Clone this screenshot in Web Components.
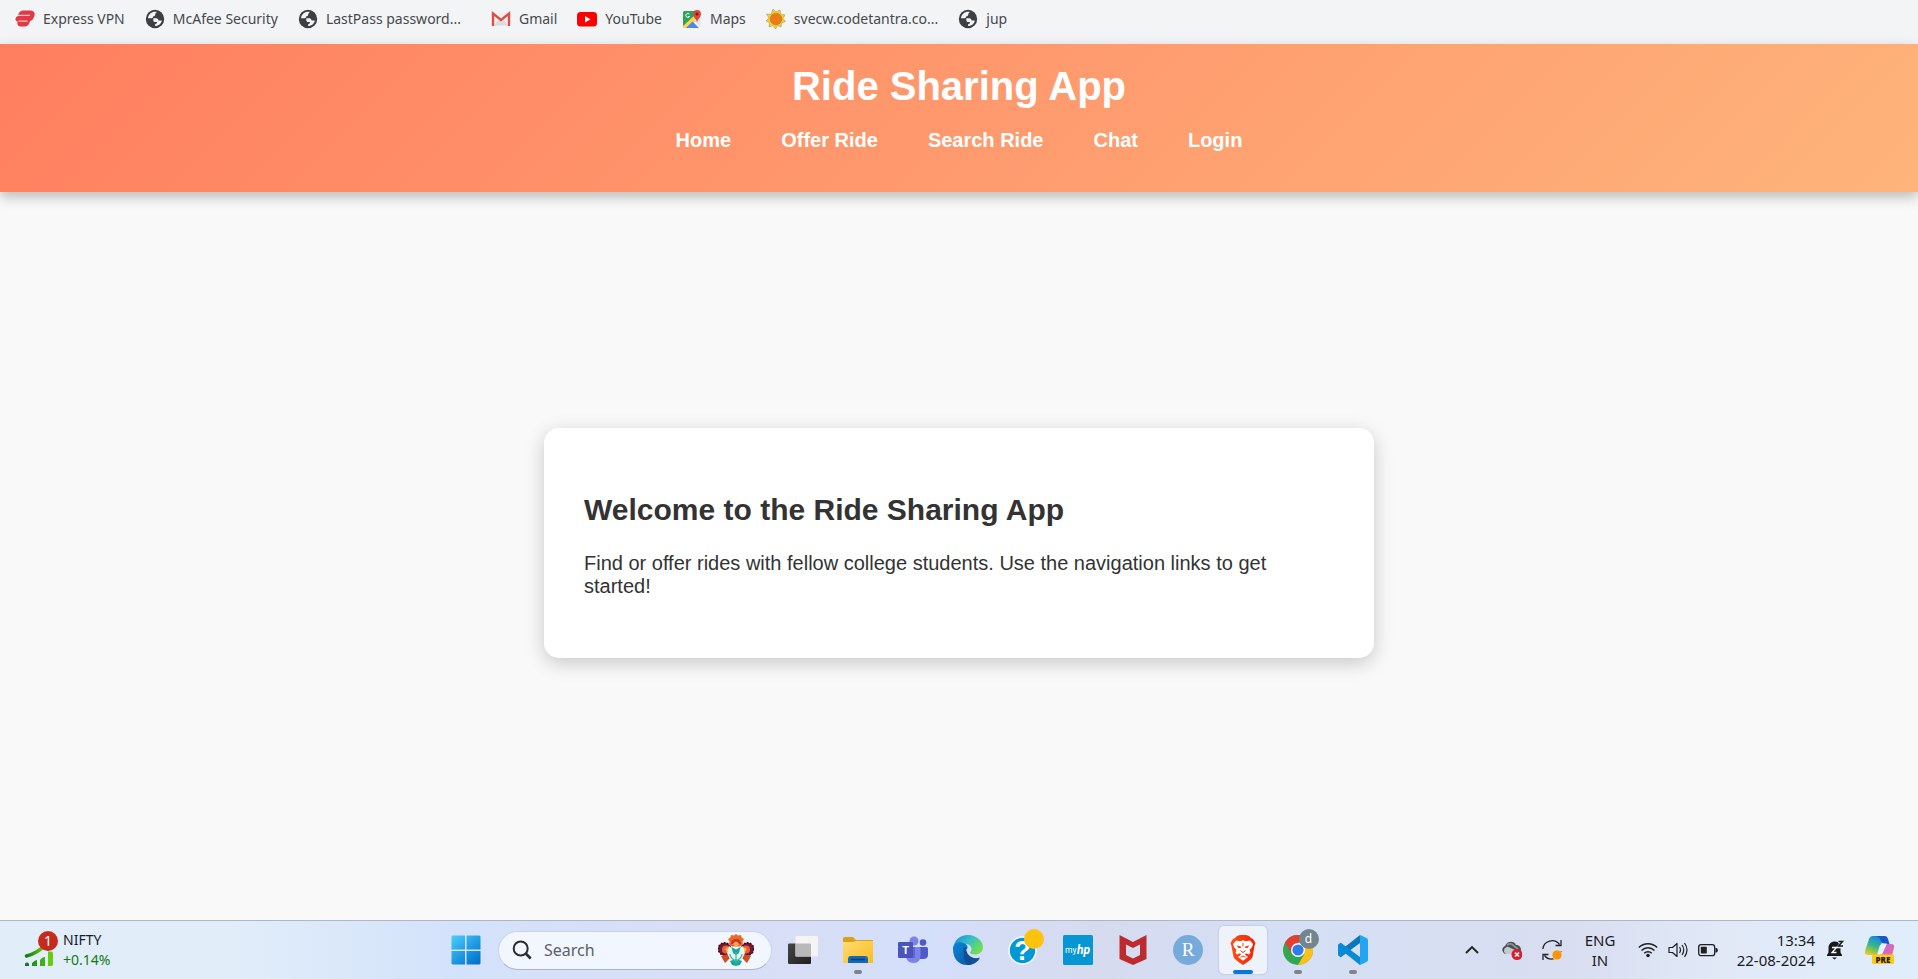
<!DOCTYPE html>
<html lang="en">
<head>
<meta charset="utf-8">
<meta name="viewport" content="width=device-width, initial-scale=1">
<title>Ride Sharing App</title>
<style>
html, body { margin: 0; height: 100%; }
body { background: #f9f9f9; color: #333; font-family: "Liberation Sans", Arial, sans-serif; }
</style>
</head>
<body>
<desk-shell>
  <bookmark-bar slot="top">
    <book-mark icon="express">Express VPN</book-mark>
    <book-mark icon="globe">McAfee Security</book-mark>
    <book-mark icon="globe" class="last">LastPass password...</book-mark>
    <book-mark icon="gmail">Gmail</book-mark>
    <book-mark icon="youtube">YouTube</book-mark>
    <book-mark icon="maps">Maps</book-mark>
    <book-mark icon="sun">svecw.codetantra.co...</book-mark>
    <book-mark icon="globe">jup</book-mark>
  </bookmark-bar>
  <site-header slot="header">
    <span slot="title">Ride Sharing App</span>
    <nav-link>Home</nav-link>
    <nav-link>Offer Ride</nav-link>
    <nav-link>Search Ride</nav-link>
    <nav-link>Chat</nav-link>
    <nav-link>Login</nav-link>
  </site-header>
  <welcome-card>
    <span slot="title">Welcome to the Ride Sharing App</span>
    Find or offer rides with fellow college students. Use the navigation links to get started!
  </welcome-card>
  <task-bar slot="bottom"></task-bar>
</desk-shell>

<script>
const icons = {
express: `<svg viewBox="0 0 20 20"><path d="M7.500 1.500h8.500a3.800 3.800 0 0 1 3.500 5l-1.200 3a3.500 3.500 0 0 1-3 2.300l-1 2.500A4.500 4.500 0 0 1 11 17.500H5.500a3.200 3.200 0 0 1-3-4.200l.2-.8A2.400 2.400 0 0 1 .6 9.300 3.400 3.400 0 0 1 3 7 6 6 0 0 1 7.500 1.500z" fill="#e03a46"/><path d="M3 6.300h12M3.500 12.200h9" stroke="#f3c3c8" stroke-width="1.300"/></svg>`,
globe: `<svg viewBox="0 0 20 20"><circle cx="10" cy="10" r="9.200" fill="#3c4043"/><path d="M12 3.100C7.500 2 3.500 5 3 9.300h3.600q1.600-.2 1.500-1.900 2.100 0 2.100-1.700Q10.300 4 12 3.100z" fill="#f3f4f6"/><path d="M8.300 9.300h3.500q1.500.3 1.800 2.200h3.200c-.5 3.200-3.200 5.600-6.700 5.500v-1.700q2-.3 2-2.300H9.600Q8 12.800 8.300 9.300z" fill="#f3f4f6"/><path d="M3.200 11.300h2.500q1.600.2 1.600 2 0 1.300 1.300 1.600v1.900C5.800 16.300 3.700 14 3.200 11.300z" fill="#3c4043"/></svg>`,
gmail: `<svg viewBox="0 0 20 20"><path d="M1 3.500h18v13H1z" fill="#eef0f2"/><path d="M3 16.500 8 10l2 1.500 2-1.500 5 6.500z" fill="#dcdcdf"/><path d="M2 17V4.500l8 6.500 8-6.500V17" fill="none" stroke="#e04f43" stroke-width="2.400"/></svg>`,
youtube: `<svg viewBox="0 0 20 20"><rect y="3" width="20" height="14.500" rx="3.500" fill="#f00"/><path d="m8 7 5.500 3.200L8 13.500z" fill="#fff"/></svg>`,
maps: `<svg viewBox="0 0 20 20"><path d="M2 2h11v8L3 19H1V3z" fill="#2fa25b"/><path d="m1 17 13-12h4v4L6 19H1z" fill="#fbd54b"/><path d="m4 19 6.500-6.500L17 19z" fill="#4b87ee"/><path d="m12 11 3.500-3 3 3v7z" fill="#e2e3e6"/><path d="M15 14c0-4-4-5-4-9a4 4 0 0 1 8 0c0 4-4 5-4 9z" fill="#df463b"/><circle cx="15" cy="5" r="1.500" fill="#761e1b"/><path d="M7.300 5A2 2 0 1 0 7.500 7.600H6" fill="none" stroke="#fff"/></svg>`,
sun: `<svg viewBox="0 0 20 20"><path d="m7 0 3 3 4-2 .5 4L19 6l-2 3.500 2.500 3-4 1.500-.5 4-3.500-1.500-2 3.500-2.500-3.500-4 1.500.5-4.500-3.500-1.500L3 9 .5 5l4.500.5z" fill="#f0d12c" stroke="#a79b63" stroke-width=".6"/><circle cx="10" cy="10" r="5.800" fill="#ed7a16" stroke="#b9762b" stroke-width=".6"/></svg>`,
stocks: `<svg viewBox="0 0 32 32"><defs><linearGradient id="g"><stop stop-color="#147b1b"/><stop offset="1" stop-color="#72d00b"/></linearGradient></defs><path d="M2.500 22c8-2 13-5 19-11" fill="none" stroke="url(#g)" stroke-width="3.500" stroke-linecap="round"/><path d="M1 31a2 2 0 0 1 4-1v2H1z" fill="#157c1b"/><path d="M8 29q3-3 5-3v6H8z" fill="#249320"/><path d="M16 26q2-3 5-3v9h-5z" fill="#41ad1a"/><path d="M24 17.500h3q2 0 2 2v11q0 1.500-2 1.500h-3z" fill="#67cb0e"/></svg>`,
windows: `<svg viewBox="0 0 30 30"><defs><linearGradient id="g" gradientUnits="userSpaceOnUse" x1="0" y1="0" x2="25" y2="30"><stop stop-color="#4cd0fb"/><stop offset="1" stop-color="#0071ce"/></linearGradient></defs><path d="M1.500.5H14v14H.5v-13zM15.500.5h13l1 1v13h-14zM.5 16H14v13.500H1.500l-1-1zM15.500 16h14v12.500l-1 1h-13z" fill="url(#g)"/></svg>`,
search: `<svg viewBox="0 0 20 20"><g fill="none" stroke="#2b2c30" stroke-width="2"><circle cx="8.700" cy="8.500" r="7"/><path d="m13.700 13.500 5 5" stroke-width="2.600"/></g></svg>`,
flowers: `<svg viewBox="0 0 36 32"><g fill="#741c2b"><circle cx="6.500" cy="15" r="6.500"/><circle cx="29.500" cy="15" r="6.500"/></g><g fill="none" stroke="#3e1424" stroke-width="2" stroke-dasharray="1.500 1.500"><circle cx="6.500" cy="15" r="6"/><circle cx="29.500" cy="15" r="6"/></g><g fill="#ee5b43"><circle cx="8" cy="15.500" r="4"/><circle cx="28" cy="15.500" r="4"/></g><g fill="#fbbd25"><circle cx="9.500" cy="15.500" r="2"/><circle cx="26.500" cy="15.500" r="2"/></g><path d="m18 0 2 1.500 3-.5.7 2.600L26 5l-1.500 2.500.5 3-3.500 2h-7l-3.500-2 .5-3L10 5l2.300-1.400L13 1l3 .5z" fill="#ee6a24"/><path d="M13 10q0-5 5-5t5 5z" fill="#c83724"/><path d="M15 10q3-5 6 0l-3 3z" fill="#fbac60"/><path d="m3 22 7-2 2 4-5 5zm30 0-7-2-2 4 5 5z" fill="#d34b23"/><path d="m11 12 7 5 7-5 2 7-5 10-4 2-4-2-5-10z" fill="#e6f5f1"/><path d="m13.500 13 4.500 2.500 4.500-2.500-1.500 6-3 2-3-2zM12 27q6-3 12 0l-2 4-4 1-4-1z" fill="#17a899"/><path d="M18 18v11M18 27c-3-1-6-4-6-7M18 27c3-1 6-4 6-7" fill="none" stroke="#45b9a8" stroke-width="1.300"/></svg>`,
taskview: `<svg viewBox="0 0 30 30"><defs><linearGradient id="g" y2="1"><stop stop-color="#454545"/><stop offset="1" stop-color="#202020"/></linearGradient></defs><rect y="8.500" width="23" height="20.500" rx="1.200" fill="url(#g)"/><rect x="7.500" y="1" width="22.500" height="20.500" rx="1.200" fill="#f4f4f4"/><path d="M7.500 8.500H22q1 0 1 1v12H7.500z" fill="#b9b9b9"/></svg>`,
folder: `<svg viewBox="0 0 30 30"><defs><linearGradient id="g" x2="1" y2="1"><stop stop-color="#ffdc72"/><stop offset="1" stop-color="#fdbb20"/></linearGradient></defs><path d="M0 3.500Q0 2 1.500 2H10l3 3h17v8H0z" fill="#dba018"/><path d="M0 7h10l3-1h17v22H1q-1 0-1-1z" fill="url(#g)"/><path d="M5 28v-4q0-3 3-3h14q3 0 3 3v4z" fill="#116bb7"/><path d="M8.500 24.500h13" stroke="#063c73" stroke-width="1.500" stroke-linecap="round"/></svg>`,
teams: `<svg viewBox="0 0 30 30"><circle cx="16" cy="6" r="4.500" fill="#7b83eb"/><circle cx="25" cy="7.500" r="3.300" fill="#5059c9"/><path d="M21 12h7.500q1.500 0 1.500 1.500V20q0 4-5 4h-4z" fill="#5059c9"/><path d="M8 12h13q1.500 0 1.500 1.500V20q0 8-7 8T8 21z" fill="#7b83eb"/><path d="M8 12h9v11H8z" fill="#6068cf"/><rect y="7" width="15" height="16" rx="1.300" fill="#4b53bc"/><text x="7.500" y="19" text-anchor="middle" font-family="Liberation Sans" font-weight="700" font-size="11" fill="#fff">T</text></svg>`,
edge: `<svg viewBox="0 0 30 30"><defs><linearGradient id="a" x2="1" y2=".6"><stop stop-color="#1484cb"/><stop offset=".5" stop-color="#36bdcf"/><stop offset="1" stop-color="#71df4b"/></linearGradient><linearGradient id="b" x2="1" y2="1"><stop stop-color="#0786db"/><stop offset="1" stop-color="#10529b"/></linearGradient></defs><path d="M0 14C1 5 7 0 15 0s15 6 15 12c0 5-4 7.500-8 7.500-3 0-5-1-5-2 0-.8 1.500-1 1.500-3.500 0-2-2-5-6-5C6 9 1 12 0 14z" fill="url(#a)"/><path d="M0 14c0-5 5-8 10-6 4 1 5.500 4 4 6-4 1-4 6-1 9 4 4 10 3 14 .5C23 29 18 30 14 30 6 30 0 24 0 14z" fill="url(#b)"/><path d="M10.500 16c0-2 1-4 2.500-4 0 8 6 13 14 10.500C23 28 19 30 15 30c-3-2-5-8-4.500-14z" fill="#114f94"/></svg>`,
help: `<svg viewBox="0 0 30 30"><circle cx="14.500" cy="15.500" r="13.500" fill="#0298d5" stroke="#f5fbff" stroke-width="1.600"/><text x="14.500" y="25" text-anchor="middle" font-family="Liberation Sans" font-weight="700" font-size="27" fill="#fff">?</text></svg>`,
myhp: `<svg viewBox="0 0 30 30"><rect width="30" height="30" rx="1.500" fill="#0796d4"/><text x="2" y="18" font-family="Roboto" font-size="8.500" fill="#fff">my</text><text x="14" y="19" font-family="Roboto" font-size="12" font-style="italic" font-weight="700" fill="#fff">hp</text></svg>`,
mcafee: `<svg viewBox="0 0 30 30"><path d="m1.500 0 13.500 7L28.500 0v24L15 30 1.500 24zM8 9.500v10.500l7 3.500 7-3.500V9.500L15 13z" fill="#bd2b2e" fill-rule="evenodd"/></svg>`,
rstudio: `<svg viewBox="0 0 30 30"><circle cx="15" cy="15" r="15" fill="#75aadb"/><text x="15" y="21" text-anchor="middle" font-family="Liberation Serif" font-size="19" fill="#fff">R</text></svg>`,
brave: `<svg viewBox="0 0 30 30"><defs><linearGradient id="g"><stop stop-color="#fb5013"/><stop offset="1" stop-color="#f2230b"/></linearGradient></defs><path d="m9 1 3-1h6l3 1 2 2 2 1 2.500 4-1 3-2 11Q23 25 15 30 7 25 5.500 22l-2-11-1-3L5 4l2-1z" fill="url(#g)"/><path d="m8 5.500 4 .7 3-1 3 1 4-.7L25 9l-1 3-2.500 3 1 2.500-1.500 2-3-1.200-1 1.500 3 2.200-5 3.700-5-3.700 3-2.200-1-1.500L9 19.500l-1.500-2 1-2.500L6 12 5 9z" fill="#fff"/><path d="m8.500 10.500 4 .8.800 1.400-2.500.6zM21.500 10.500l-4 .8-.8 1.400 2.500.6z" fill="#f13f16"/><path d="M12.500 15.500 14 17l1 .3 1-.3 1.500-1.500M12.500 22.300 15 21l2.500 1.300M15 8v3.500" fill="none" stroke="#f13f16"/></svg>`,
chrome: `<svg viewBox="0 0 30 30"><circle cx="15" cy="15" r="15" fill="#33a653"/><path d="M2 7.500A15 15 0 0 1 28 7.500H15l-6.500 11z" fill="#e43e31"/><path d="M28 7.500A15 15 0 0 1 15 30l6.500-11.300L15 7.500z" fill="#fbc116"/><circle cx="15" cy="15" r="7" fill="#fff"/><circle cx="15" cy="15" r="5.600" fill="#2f7deb"/></svg>`,
vscode: `<svg viewBox="0 0 30 30"><path d="m0 10 2.500-2.200 5 3.700L22 0v8L3 22 0 20z" fill="#0b77bd"/><path d="m0 20 2.500 2.300 5-3.800L22 30v-8L3 8 0 10z" fill="#088bd2"/><path d="m22 0 6 2.700Q30 3.500 30 5v20q0 1.500-2 2.300L22 30z" fill="#25a5f1"/></svg>`,
chevron: `<svg viewBox="0 0 20 20"><path d="m4 13 6-6 6 6" fill="none" stroke="#202226" stroke-width="1.900"/></svg>`,
cloud: `<svg viewBox="0 0 20 20"><path d="M1 12a4 4 0 0 1 2-6C5 1 12 0 14 5c3 0 5 2 5 5 0 2-1 4-4 4H4q-2 0-3-2z" fill="#4b4d50"/><path d="m2.500 8.500 3-2L13 10l3 4H4q-3-2-1.500-5.500z" fill="#c5c9cd"/><path d="M5 5q4-3 7 1l4 3" fill="none" stroke="#8d9093" stroke-width="2"/><circle cx="15" cy="14.500" r="5.500" fill="#d9202e"/><path d="m13 12.500 4 4m0-4-4 4" stroke="#fff" stroke-width="1.500"/></svg>`,
sync: `<svg viewBox="0 0 20 20"><path d="M.8 9A9.300 9.300 0 0 1 17.500 4.500M19 0v5.500h-5.500M19 11a9.300 9.300 0 0 1-16.500 4.500M1 20v-5.500h5.500" fill="none" stroke="#222428" stroke-width="1.300"/><circle cx="15" cy="15" r="5" fill="#f99309" stroke="#e2ecf8" stroke-width=".6"/></svg>`,
wifi: `<svg viewBox="0 0 20 20"><g fill="none" stroke="#1d2024" stroke-width="1.400"><path d="M.8 7.500a13 13 0 0 1 18.400 0M3.500 10.500a9 9 0 0 1 13 0M6.200 13.300a5.400 5.400 0 0 1 7.600 0"/></g><circle cx="10" cy="15.500" r="1.800" fill="#1d2024"/></svg>`,
volume: `<svg viewBox="0 0 20 20"><path d="M1 7.500h3.500L9 3.500v13l-4.500-4H1zM11.500 7q2 3 0 6M14 5q3.500 5 0 10M16.500 3q5 7 0 14" fill="none" stroke="#1d2024" stroke-width="1.200" stroke-linejoin="round"/></svg>`,
battery: `<svg viewBox="0 0 20 20"><rect x=".7" y="4.700" width="16" height="11" rx="2.500" fill="none" stroke="#1d2024" stroke-width="1.300"/><rect x="2.800" y="6.800" width="6" height="6.800" rx=".8" fill="#1d2024"/><path d="M17.500 8h.8q1.500 0 1.500 2.200t-1.500 2.200h-.8z" fill="#1d2024"/></svg>`,
bell: `<svg viewBox="0 0 20 20"><path d="M10 1.500C6 1.500 3.500 4 3.500 8v4.500L2 15v1h15v-1l-1.500-2.500V8q0-6.500-5.500-6.500z" fill="#17191c"/><path d="M7 17.500h5l-2.500 2z" fill="#17191c"/><path d="M13 1.500h5l-4 5h4.500" fill="none" stroke="#e1edf9" stroke-width="3.400"/><path d="M13.500 1.500h4l-4 4.500H18" fill="none" stroke="#17191c" stroke-width="1.500"/><path d="M7 7.500h4.500l-4.500 5h4.500" fill="none" stroke="#fff" stroke-width="1.300"/></svg>`,
copilot: `<svg viewBox="0 0 30 30"><defs><linearGradient id="a" x1=".6" x2=".2" y2="1"><stop stop-color="#1789df"/><stop offset=".5" stop-color="#39b884"/><stop offset="1" stop-color="#f4cf10"/></linearGradient><linearGradient id="b" y2="1"><stop stop-color="#ad69ee"/><stop offset="1" stop-color="#fb6c83"/></linearGradient></defs><path d="M8 1h9q2 0 1 3l-5 16H3q-4 0-3-4L4 4q1-3 4-3z" fill="url(#a)"/><path d="M9 1h11q2 0 3 3l1.500 5h-4q-4 0-5.500-5-1-3-6-3z" fill="#1558cc"/><path d="M20 9h6q4 0 3 4l-3 11q-1 4-5 4H10l3-4z" fill="url(#b)"/><path d="M18.500 8.500H22l-5 11h-5l2.500-8q1-3 4-3z" fill="#eaf1fb"/><rect x="7" y="19.500" width="22" height="9.500" rx="1.500" fill="#ffc91b"/><text x="18" y="27.500" text-anchor="middle" font-family="Open Sans" font-weight="800" font-size="8" fill="#221d0a">PRE</text></svg>`
};

/* Shared base: each element supplies its own template markup. */
class Base extends HTMLElement {
  constructor() {
    super();
    const t = document.createElement('template');
    t.innerHTML = this.view();
    this.attachShadow({ mode: 'open' }).append(t.content.cloneNode(true));
  }
}
const define = (name, view) => customElements.define(name, class extends Base { view() { return view(this); } });

define('app-icon', el => `<style>
:host { display: block; width: var(--icon, 20px); height: var(--icon, 20px); flex: none; }
svg { display: block; width: 100%; height: 100%; }
</style>${icons[el.getAttribute('name')]}`);

define('desk-shell', () => `<style>
:host { display: flex; flex-direction: column; height: 100%; }
main { flex: 1 0 auto; display: flex; align-items: center; justify-content: center; padding: 0 20px 26px; }
</style>
<slot name="top"></slot><slot name="header"></slot><main><slot></slot></main><slot name="bottom"></slot>`);

define('bookmark-bar', () => `<style>
:host { display: block; flex: none; background: #f3f4f6; }
nav { display: flex; align-items: center; gap: 20px; height: 38px; padding: 0 15px 6px; overflow: hidden; }
::slotted(.last) { margin-right: 10px; }
</style><nav aria-label="Bookmarks"><slot></slot></nav>`);

define('book-mark', el => `<style>
:host { display: block; flex: none; }
a { display: flex; align-items: center; gap: 8px; color: #46494d; text-decoration: none; font: 14px/20px "Noto Sans", sans-serif; white-space: nowrap; }
</style><a href="#"><app-icon name="${el.getAttribute('icon')}"></app-icon><span><slot></slot></span></a>`);

define('site-header', () => `<style>
:host { display: block; flex: none; position: relative; background: linear-gradient(135deg, #ff7e5f, #feb47b); color: #fff; padding: 20px 20px 40px; box-shadow: 0 5px 12px rgba(0,0,0,.25); text-align: center; }
h1 { margin: 0 0 21px; font-size: 40px; line-height: 44px; }
nav { display: flex; justify-content: center; gap: 50px; }
</style><h1><slot name="title"></slot></h1><nav aria-label="Main"><slot></slot></nav>`);

define('nav-link', () => `<style>
:host { display: block; }
a { display: block; color: inherit; text-decoration: none; font-size: 20px; line-height: 23px; font-weight: 700; }
</style><a href="#"><slot></slot></a>`);

define('welcome-card', () => `<style>
:host { display: block; box-sizing: border-box; width: 100%; max-width: 830px; padding: 65px 40px 60px; background: #fff; border-radius: 15px; box-shadow: 0 5px 19px rgba(0,0,0,.2); }
h2 { margin: 0 0 25px; font-size: 30px; line-height: 34px; }
p { margin: 0; font-size: 20px; line-height: 23px; }
</style><h2><slot name="title"></slot></h2><p><slot></slot></p>`);

define('task-button', el => `<style>
:host { display: flex; justify-content: center; width: 55px; flex: none; }
button { position: relative; display: flex; align-items: center; justify-content: center; width: 48px; height: 48px; padding: 0; border: 0; border-radius: 5px; background: none; --icon: 30px; }
:host([active]) button { background: #eef2fb; box-shadow: 0 0 1px 1px rgba(150,160,190,.25); }
:host([running]) button::after { content: ""; position: absolute; bottom: 0; left: 20px; width: 8px; height: 4px; border-radius: 2px; background: #80838c; }
:host([active]) button::after { left: 14px; width: 20px; background: #0c78d6; }
::slotted(span) { position: absolute; top: 3px; right: 3px; display: block; width: 20px; height: 20px; border-radius: 50%; font: 12px/20px "Noto Sans", sans-serif; color: #fff; }
</style><button aria-label="${el.getAttribute('label')}"><app-icon name="${el.getAttribute('icon')}"></app-icon><slot></slot></button>`);

define('search-box', () => `<style>
:host { display: flex; align-items: center; box-sizing: border-box; width: 274px; height: 39px; margin: 0 3px 0 5px; padding: 0 17px 0 13px; border: 1px solid #c9d4ec; border-bottom-color: #a9b5ce; border-radius: 20px; background: #f2f6fe; }
label { display: flex; }
input { flex: 1; min-width: 0; margin: 0 0 0 12px; padding: 0; border: 0; outline: 0; background: none; color: #333; font: 16px/22px "Noto Sans", sans-serif; }
input::placeholder { color: #5d6067; opacity: 1; }
.art { --icon: 36px; }
</style><label for="q" aria-label="Search"><app-icon name="search"></app-icon></label><input id="q" type="text" placeholder="Search"><app-icon class="art" name="flowers"></app-icon>`);

define('stock-widget', () => `<style>
:host { display: block; }
button { display: flex; align-items: center; gap: 7px; padding: 0; border: 0; background: none; text-align: left; font: 14px/20px "Noto Sans", sans-serif; color: #1b1c1f; }
.pic { position: relative; --icon: 32px; }
.badge { position: absolute; top: -3px; left: 14px; width: 20px; height: 20px; border-radius: 50%; background: #c42b1c; color: #fff; text-align: center; }
.line { display: block; }
.up { color: #107c10; }
</style><button><span class="pic"><app-icon name="stocks"></app-icon><span class="badge">1</span></span><span><span class="line">NIFTY</span><span class="line up">+0.14%</span></span></button>`);

define('system-tray', () => `<style>
:host { display: flex; align-items: center; font: 15px/20px "Noto Sans", sans-serif; color: #1b1c1f; }
button { display: flex; align-items: center; gap: 10px; border: 0; padding: 0; margin: 0; background: none; color: inherit; font: inherit; }
.apps { display: flex; gap: 20px; }
.lang { display: block; width: 76px; text-align: center; }
.clock { display: block; width: 97px; text-align: right; }
.line { display: block; }
.bell { margin-left: 10px; }
.copilot { --icon: 30px; margin-left: 20px; }
</style>
<div class="apps"><button aria-label="Hidden icons"><app-icon name="chevron"></app-icon></button><button aria-label="Cloud storage"><app-icon name="cloud"></app-icon></button><button aria-label="Updates"><app-icon name="sync"></app-icon></button></div>
<button class="lang"><span class="line">ENG</span><span class="line">IN</span></button>
<button aria-label="Network, volume and battery"><app-icon name="wifi"></app-icon><app-icon name="volume"></app-icon><app-icon name="battery"></app-icon></button>
<button class="clock"><span class="line">13:34</span><span class="line">22-08-2024</span></button>
<button class="bell" aria-label="Notifications"><app-icon name="bell"></app-icon></button>
<button class="copilot" aria-label="Copilot preview"><app-icon name="copilot"></app-icon></button>`);

define('task-bar', () => `<style>
:host { display: flex; flex: none; align-items: center; box-sizing: border-box; height: 59px; padding: 0 23px 0 24px; overflow: hidden; border-top: 1px solid #b0b6c4; background: linear-gradient(90deg, #e1edf9 0 12%, #d3e2fb 24%, #d9def4 38%, #d4dffa 48%, #d6dbef 57%, #d4dff5 67%, #d9def0 82%, #e1e9f7 90%, #e0edfa); }
stock-widget { flex: 0 0 414px; }
.apps { display: flex; align-items: center; height: 48px; }
system-tray { margin-left: auto; }
.dot { background: #ffc20e; }
.user { background: #738690; }
</style>
<stock-widget></stock-widget>
<div class="apps">
<task-button icon="windows" label="Start"></task-button><search-box></search-box>
<task-button icon="taskview" label="Task view"></task-button>
<task-button icon="folder" label="File Explorer" running></task-button>
<task-button icon="teams" label="Teams"></task-button>
<task-button icon="edge" label="Edge"></task-button>
<task-button icon="help" label="Support"><span class="dot"></span></task-button>
<task-button icon="myhp" label="myHP"></task-button>
<task-button icon="mcafee" label="McAfee"></task-button>
<task-button icon="rstudio" label="RStudio"></task-button>
<task-button icon="brave" label="Brave" running active></task-button>
<task-button icon="chrome" label="Chrome" running><span class="user">d</span></task-button>
<task-button icon="vscode" label="Visual Studio Code" running></task-button>
</div>
<system-tray></system-tray>`);
</script>
</body>
</html>
